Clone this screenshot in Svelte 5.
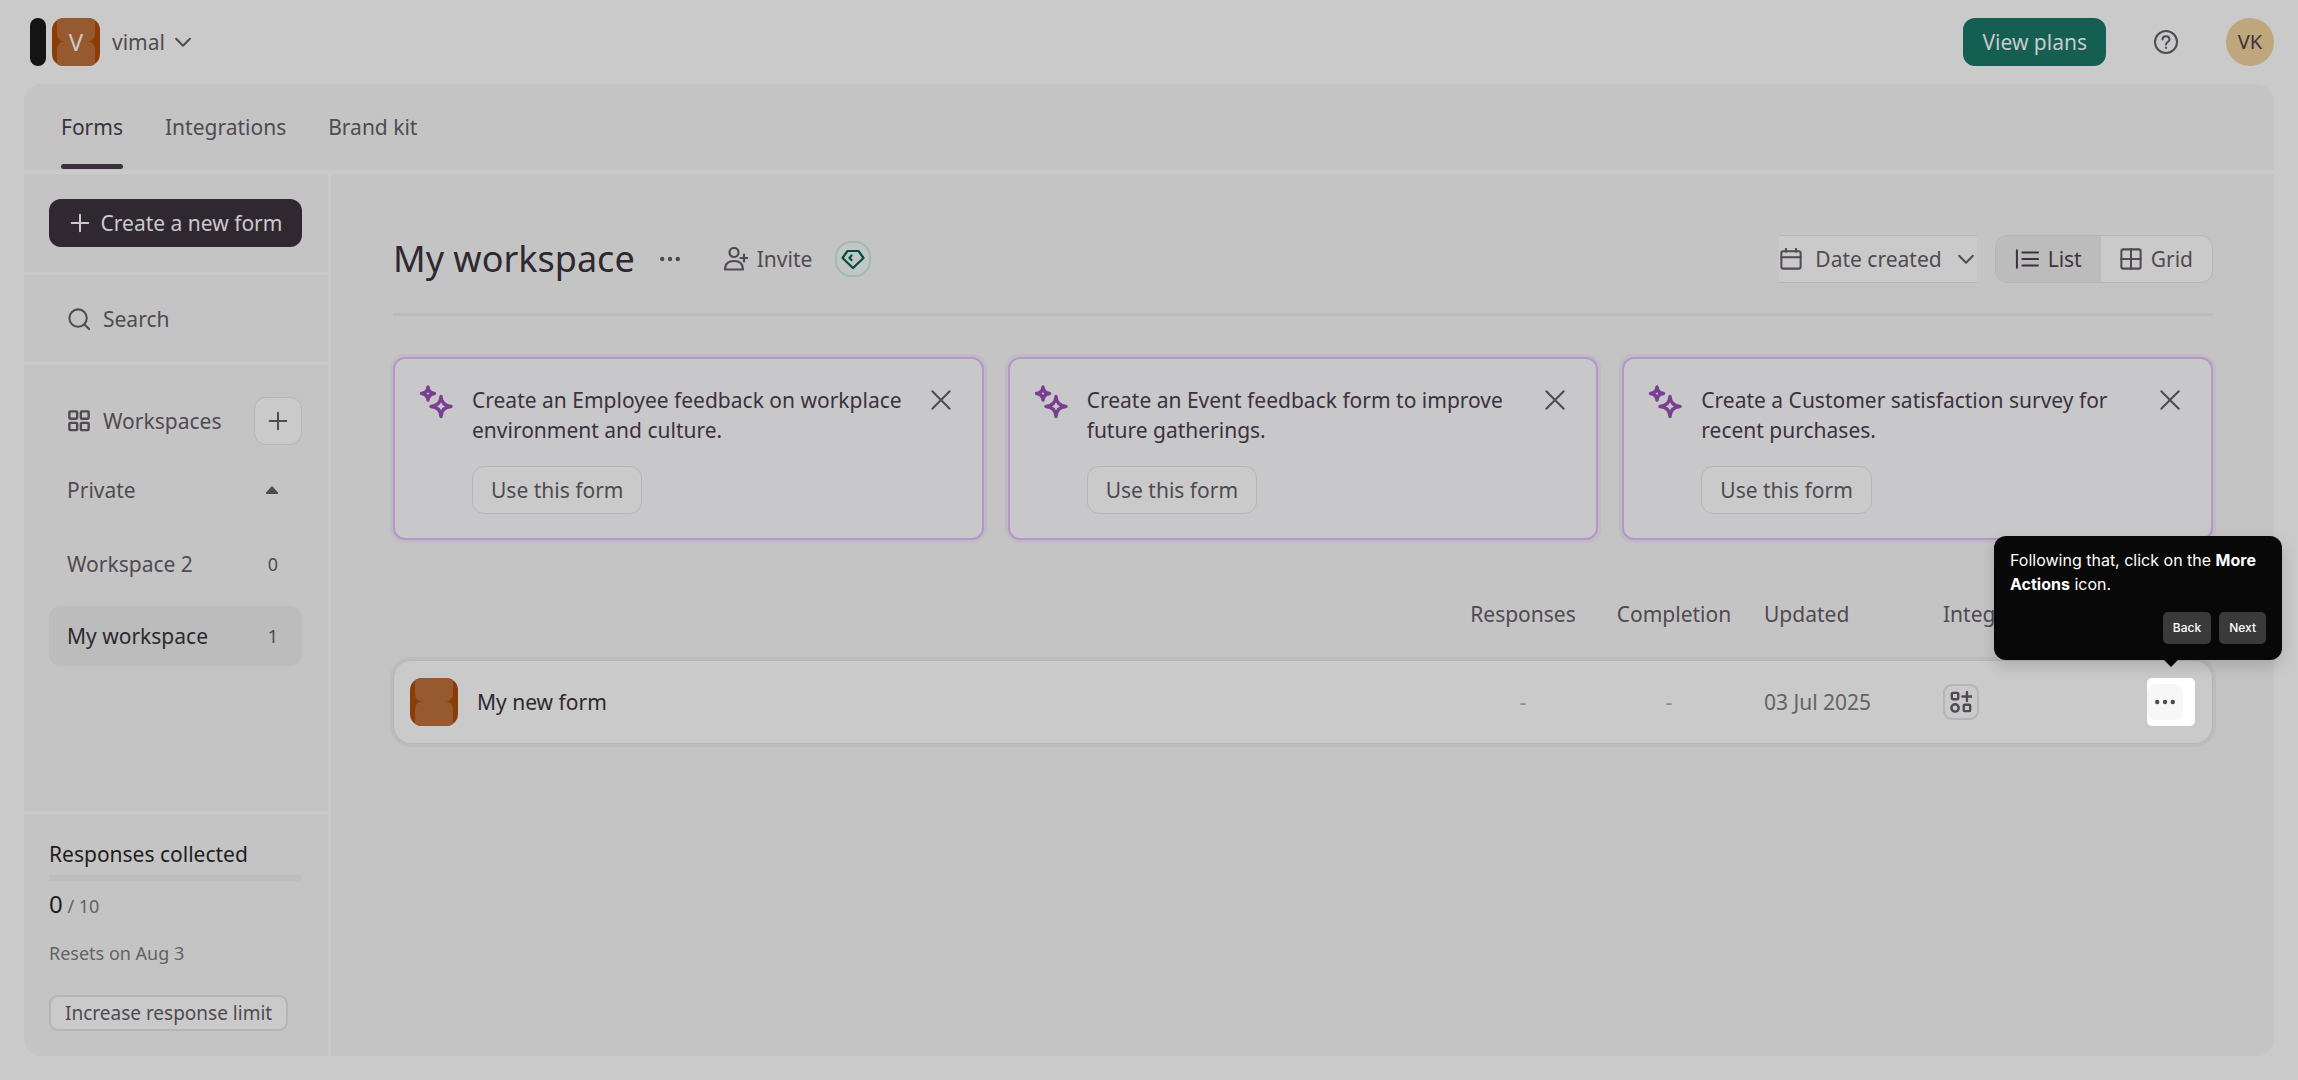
<script>
  let tabs = ["Forms", "Integrations", "Brand kit"];
  let activeTab = "Forms";

  let workspaces = [
    { name: "Workspace 2", forms: 0 },
    { name: "My workspace", forms: 1 },
  ];
  let activeWorkspace = "My workspace";

  let suggestions = [
    "Create an Employee feedback on workplace environment and culture.",
    "Create an Event feedback form to improve future gatherings.",
    "Create a Customer satisfaction survey for recent purchases.",
  ];

  let forms = [{ name: "My new form", updated: "03 Jul 2025" }];

  let view = "list";
  let showTip = true;

  function dismiss(text) {
    suggestions = suggestions.filter((s) => s !== text);
  }
</script>

{#snippet plus()}
  <svg class="icon" viewBox="0 0 24 24"><path d="M12 3v18M3 12h18" /></svg>
{/snippet}

{#snippet dots()}
  <svg class="icon fill" viewBox="0 0 24 24">
    <circle cx="3.500" cy="12" r="2.400" />
    <circle cx="12" cy="12" r="2.400" />
    <circle cx="20.500" cy="12" r="2.400" />
  </svg>
{/snippet}

{#snippet chevron()}
  <svg class="icon" viewBox="0 0 24 24"><path d="M4.500 8.500l7.500 7.500 7.500-7.500" /></svg>
{/snippet}

{#snippet tile()}
  <svg class="tile" viewBox="0 0 48 48">
    <rect width="48" height="48" rx="12" fill="#8a3d06" />
    <path
      d="M5 2Q8 0 12 0h24q4 0 7 2v13q0 8-7 8.500 7 .5 7 8.500v14q-3 2-7 2H12q-4 0-7-2V32q0-8 7-8.500-7-.5-7-8.500z"
      fill="#975a30"
    />
  </svg>
{/snippet}

<div class="page">
  <header>
    <div class="account">
      <span class="mark"></span>
      <span class="avatar">{@render tile()}<span>V</span></span>
      <button class="plain account-name">vimal {@render chevron()}</button>
    </div>
    <div class="header-actions">
      <button class="plans">View plans</button>
      <button class="plain help" aria-label="Help">
        <svg class="icon" viewBox="0 0 24 24">
          <circle cx="12" cy="12" r="11" />
          <path d="M8.500 9.500c0-4.500 7-4.500 7 0 0 2.500-3.500 2.500-3.500 5" />
          <path d="M12 17.500v.5" />
        </svg>
      </button>
      <button class="user" aria-label="Account">VK</button>
    </div>
  </header>

  <div class="panel">
    <nav class="tabs">
      {#each tabs as tab}
        <a href="#{tab}" class:active={tab === activeTab}>{tab}</a>
      {/each}
    </nav>

    <div class="body">
      <aside>
        <div class="create">
          <button>{@render plus()} Create a new form</button>
        </div>
        <div class="search">
          <svg class="icon" viewBox="0 0 24 24">
            <circle cx="11" cy="11" r="9.500" /><path d="M18 18l5 5" />
          </svg>
          <input type="text" placeholder="Search" aria-label="Search" />
        </div>
        <div class="workspaces">
          <div class="heading">
            <svg class="icon bold" viewBox="0 0 24 24">
              <rect x="1.500" y="1.500" width="8.500" height="8" rx="1" />
              <rect x="14" y="1.500" width="8.500" height="8" rx="1" />
              <rect x="1.500" y="14" width="8.500" height="8" rx="1" />
              <rect x="14" y="14" width="8.500" height="8" rx="1" />
            </svg>
            <span>Workspaces</span>
            <button class="outlined add" aria-label="Add workspace">{@render plus()}</button>
          </div>
          <button class="plain item group">
            Private
            <svg viewBox="0 0 12 8"><path d="M6 0l6 6.500q.3 1.500-1 1.500H1Q-.3 8 0 6.500z" /></svg>
          </button>
          <ul>
            {#each workspaces as workspace}
              <li>
                <button
                  class="plain item"
                  class:active={workspace.name === activeWorkspace}
                  on:click={() => (activeWorkspace = workspace.name)}
                >
                  {workspace.name}
                  <small>{workspace.forms}</small>
                </button>
              </li>
            {/each}
          </ul>
        </div>
        <div class="usage">
          <p class="usage-title">Responses collected</p>
          <div class="meter"></div>
          <p class="count"><b>0</b> / 10</p>
          <p class="resets">Resets on Aug 3</p>
          <button class="outlined limit">Increase response limit</button>
        </div>
      </aside>

      <main>
        <div class="toolbar">
          <h1>My workspace</h1>
          <button class="plain more" aria-label="Workspace actions">{@render dots()}</button>
          <button class="plain invite">
            <svg class="icon" viewBox="0 0 24 24">
              <circle cx="10" cy="5.500" r="4.500" />
              <path d="M1 22.500c0-5.500 3.500-8.500 9-8.500s9 3 9 8.500z" />
              <path d="M20 7.500v7M16.500 11h7" />
            </svg>
            Invite
          </button>
          <span class="gem">
            <svg class="icon" viewBox="0 0 24 24">
              <path d="M6.500 4h11l5 7L12 21 1.500 11z" />
              <path d="M10.500 8.500L8.500 11l2 2" />
            </svg>
          </span>
          <button class="sort">
            <svg class="icon" viewBox="0 0 24 24">
              <rect x="1.500" y="3.500" width="21" height="19" rx="2" />
              <path d="M1.500 10h21M6.500 1v3M17.500 1v3" />
            </svg>
            Date created
            {@render chevron()}
          </button>
          <div class="view">
            <button class:active={view === "list"} on:click={() => (view = "list")}>
              <svg class="icon wide" viewBox="0 0 26 24">
                <path d="M2 2.500v19M8 5h17M8 12h17M8 19h17" />
              </svg>
              List
            </button>
            <button class:active={view === "grid"} on:click={() => (view = "grid")}>
              <svg class="icon" viewBox="0 0 24 24">
                <rect x="1.500" y="1.500" width="21" height="21" rx="2" />
                <path d="M12 1.500v21M1.500 12h21" />
              </svg>
              Grid
            </button>
          </div>
        </div>

        <div class="suggestions">
          {#each suggestions as text}
            <section>
              <svg class="sparkles" viewBox="0 0 34 34">
                <path d="M8 2q.5 6 6.500 6.500-6 .5-6.500 6.500-.5-6-6.500-6.500 6-.5 6.500-6.500z" />
                <path d="M21 11.500q.5 9 10 10-9.500.5-10 10-.5-9.500-10-10 9.500-1 10-10z" />
              </svg>
              <div>
                <p>{text}</p>
                <button class="outlined">Use this form</button>
              </div>
              <button class="plain close" aria-label="Dismiss" on:click={() => dismiss(text)}>
                <svg class="icon" viewBox="0 0 24 24"><path d="M2.500 2.500l19 19M21.500 2.500l-19 19" /></svg>
              </button>
            </section>
          {/each}
        </div>

        <table>
          <thead>
            <tr>
              <th></th>
              <th class="center">Responses</th>
              <th class="center completion">Completion</th>
              <th class="updated">Updated</th>
              <th>Integrations</th>
              <th></th>
            </tr>
          </thead>
          <tbody>
            {#each forms as form}
              <tr>
                <td class="name">{@render tile()} {form.name}</td>
                <td class="center">-</td>
                <td class="center">-</td>
                <td class="updated">{form.updated}</td>
                <td>
                  <button class="outlined apps" aria-label="Integrations">
                    <svg class="icon bold" viewBox="0 0 24 24">
                      <rect x="2" y="2" width="7" height="7" rx="1" />
                      <path d="M18.500 1v10M13.500 6h10" />
                      <circle cx="5.500" cy="18.500" r="4" />
                      <rect x="15" y="15" width="7" height="7" rx="1" />
                    </svg>
                  </button>
                </td>
                <td class="actions">
                  <div class="spotlight">
                    <button aria-label="More actions">{@render dots()}</button>
                  </div>
                  {#if showTip}
                    <div class="tip">
                      <p>Following that, click on the <b>More Actions</b> icon.</p>
                      <div>
                        <button>Back</button>
                        <button on:click={() => (showTip = false)}>Next</button>
                      </div>
                    </div>
                  {/if}
                </td>
              </tr>
            {/each}
          </tbody>
        </table>
      </main>
    </div>
  </div>
</div>

<style>
  :global(body) {
    background: #cacaca;
  }
  .page {
    box-sizing: border-box;
    min-height: 100vh;
    padding: 0 24px 24px;
    display: flex;
    flex-direction: column;
    font-family: "Noto Sans", sans-serif;
    font-size: 21px;
    line-height: 30px;
    color: #504a52;
  }
  .page :global(*) {
    box-sizing: border-box;
  }
  p,
  h1,
  ul {
    margin: 0;
    padding: 0;
    list-style: none;
    font-weight: 400;
  }
  b {
    font-weight: 400;
  }
  button,
  input {
    font: inherit;
    color: inherit;
    cursor: pointer;
  }
  .plain {
    border: 0;
    padding: 0;
    background: none;
    display: flex;
    align-items: center;
  }
  .outlined {
    border: 1px solid #b5b5b5;
    border-radius: 12px;
    background: #cacaca;
    display: flex;
    align-items: center;
    justify-content: center;
  }
  .icon {
    width: 22px;
    height: 22px;
    flex: none;
    fill: none;
    stroke: currentColor;
    stroke-width: 2.2;
    stroke-linecap: round;
    stroke-linejoin: round;
  }
  .icon.bold {
    stroke-width: 2.6;
  }
  .icon.fill {
    fill: currentColor;
    stroke: none;
  }
  .icon.wide {
    width: 24px;
  }
  .tile {
    width: 48px;
    height: 48px;
    flex: none;
    display: block;
  }

  header {
    height: 84px;
    padding-left: 6px;
    display: flex;
    align-items: center;
    justify-content: space-between;
  }
  .account,
  .header-actions {
    display: flex;
    align-items: center;
  }
  .mark {
    width: 16px;
    height: 48px;
    border-radius: 8px;
    background: #141414;
    margin-right: 6px;
  }
  .avatar {
    display: grid;
    place-items: center;
    color: #cacaca;
    font-size: 24px;
  }
  .avatar > :global(*) {
    grid-area: 1 / 1;
  }
  .account-name {
    margin-left: 12px;
    gap: 7px;
  }
  .plans {
    height: 48px;
    padding: 0 19px;
    border: 0;
    border-radius: 12px;
    background: #145e52;
    color: #cacaca;
  }
  .help {
    margin: 0 48px;
  }
  .help .icon {
    width: 24px;
    height: 24px;
    stroke-width: 2;
  }
  .user {
    width: 48px;
    height: 48px;
    padding: 0;
    border: 0;
    border-radius: 50%;
    background: #bfa67c;
    color: #3c323e;
    font-size: 20px;
  }

  .panel {
    flex: 1;
    display: flex;
    flex-direction: column;
    border-radius: 18px;
    background: #c4c4c4;
  }
  .tabs {
    height: 90px;
    padding: 0 37px;
    display: flex;
    gap: 42px;
    border-bottom: 4px solid #cacaca;
  }
  .tabs a {
    height: 85px;
    padding-top: 28px;
    color: inherit;
    text-decoration: none;
  }
  .tabs a.active {
    color: #3c323e;
    display: flex;
    flex-direction: column;
    justify-content: space-between;
  }
  .tabs a.active::after {
    content: "";
    height: 5px;
    border-radius: 3px;
    background: #3c323e;
  }
  .body {
    flex: 1;
    display: flex;
  }

  aside {
    width: 307px;
    flex: none;
    display: flex;
    flex-direction: column;
    border-right: 3px solid #cacaca;
  }
  aside > div {
    padding: 25px 26px 25px 25px;
    border-bottom: 3px solid #cacaca;
  }
  .create button {
    width: 100%;
    height: 48px;
    padding: 0;
    display: flex;
    align-items: center;
    justify-content: center;
    gap: 10px;
    border: 0;
    border-radius: 12px;
    background: #2f2830;
    color: #cacaca;
  }
  .search {
    height: 90px;
    display: flex;
    align-items: center;
    gap: 13px;
  }
  aside .search {
    padding-left: 44px;
  }
  .search input {
    width: 100%;
    min-width: 0;
    padding: 0;
    border: 0;
    background: none;
    outline: 0;
  }
  .search input::placeholder {
    color: inherit;
    opacity: 1;
  }
  aside .workspaces {
    flex: 1;
    padding-top: 32px;
  }
  .heading {
    display: flex;
    align-items: center;
    gap: 13px;
    padding-left: 19px;
  }
  .add {
    width: 48px;
    height: 48px;
    margin-left: auto;
    padding: 0;
  }
  .item {
    width: 100%;
    height: 60px;
    padding: 0 24px 0 18px;
    justify-content: space-between;
    border-radius: 12px;
  }
  .group {
    margin: 15px 0 14px;
  }
  .group svg {
    width: 12px;
    height: 8px;
    fill: currentColor;
  }
  ul {
    display: flex;
    flex-direction: column;
    gap: 12px;
  }
  .item small {
    font-size: 18px;
  }
  .item.active {
    background: #bcbcbc;
    color: #2f2830;
  }
  .active small {
    color: #504a52;
  }
  aside .usage {
    border-bottom: 0;
  }
  .usage-title,
  .count b {
    color: #1e1e1e;
  }
  .meter {
    height: 6px;
    margin: 6px 0 8px;
    border-radius: 3px;
    background: #bebebe;
  }
  .count,
  .resets {
    font-size: 18px;
    color: #636363;
  }
  .count b {
    font-size: 24px;
  }
  .resets {
    margin: 17px 0 27px;
  }
  .limit {
    height: 36px;
    padding: 0 14px;
    border-radius: 9px;
    border-width: 2px;
    font-size: 19px;
  }

  main {
    flex: 1;
    min-width: 0;
    padding: 60px 61px 60px 62px;
  }
  .toolbar {
    height: 82px;
    padding-bottom: 30px;
    display: flex;
    align-items: center;
    border-bottom: 3px solid #bcbcbc;
  }
  h1 {
    font-size: 36px;
    line-height: 48px;
    color: #2f2830;
    white-space: nowrap;
  }
  .more {
    margin: 0 43px 0 24px;
  }
  .invite {
    gap: 9px;
  }
  .invite .icon,
  .gem .icon {
    width: 24px;
    height: 24px;
  }
  .gem {
    width: 36px;
    height: 36px;
    margin-left: 23px;
    display: flex;
    align-items: center;
    justify-content: center;
    border: 2px solid #9fbab3;
    border-radius: 16px;
    background: #c2c7c5;
    color: #044b40;
  }
  .sort {
    height: 48px;
    margin: 0 18px 0 auto;
    padding: 0 0 0 1px;
    display: flex;
    align-items: center;
    gap: 13px;
    border: solid #b5b5b5;
    border-width: 1px 0;
    background: #cacaca;
  }
  .view {
    height: 48px;
    display: flex;
    overflow: hidden;
    border: 1px solid #b5b5b5;
    border-radius: 12px;
    background: #cacaca;
  }
  .view button {
    padding: 0 19px;
    display: flex;
    align-items: center;
    gap: 9px;
    border: 0;
    background: none;
  }
  .view button.active {
    background: #bcbcbc;
    color: #3c323e;
  }

  .suggestions {
    margin-top: 41px;
    display: grid;
    grid-template-columns: repeat(3, 1fr);
    gap: 24px;
  }
  section {
    padding: 26px 30px 24px 25px;
    display: flex;
    align-items: flex-start;
    border: 2px solid #b497c4;
    border-radius: 12px;
    background: #c8c8ca;
    box-shadow: 0 0 0 3px #c1b9c5;
    color: #3c323e;
  }
  .sparkles {
    width: 34px;
    height: 34px;
    margin-right: 18px;
    flex: none;
    fill: none;
    stroke: #7b3f91;
    stroke-width: 3.4;
    stroke-linejoin: round;
  }
  section > div {
    flex: 1;
  }
  section .outlined {
    height: 48px;
    margin-top: 21px;
    padding: 0 18px;
    color: #504a52;
  }
  .close {
    margin: 4px 0 0 20px;
    color: #504a52;
  }

  table {
    width: 100%;
    margin-top: 56px;
    display: block;
  }
  thead,
  tbody {
    display: block;
  }
  tr {
    display: grid;
    grid-template-columns: 1fr 142px 150px 199px 204px 66px;
    align-items: center;
  }
  th,
  td {
    padding: 0;
    text-align: left;
    font-weight: 400;
  }
  thead tr {
    height: 36px;
    margin-bottom: 28px;
  }
  tbody tr {
    height: 84px;
    border-radius: 18px;
    background: #cacaca;
    box-shadow: inset 0 0 0 1px #b5b5b5, 0 0 0 3px #bcbcbc;
  }
  td {
    color: #636363;
  }
  .center {
    text-align: center;
  }
  td.center {
    color: #8c8c8c;
  }
  .completion {
    padding-left: 10px;
  }
  .updated {
    padding-left: 20px;
  }
  .name {
    padding-left: 17px;
    display: flex;
    align-items: center;
    gap: 19px;
    color: #2f2830;
  }
  .apps {
    width: 36px;
    height: 36px;
    padding: 0;
    border-radius: 9px;
    border-width: 2px;
    color: #504a52;
  }
  .actions {
    position: relative;
  }
  .spotlight {
    width: 48px;
    height: 48px;
    display: flex;
    align-items: center;
    border-radius: 5px;
    background: #fff;
  }
  .spotlight button {
    width: 36px;
    height: 36px;
    padding: 0;
    display: flex;
    align-items: center;
    justify-content: center;
    border: 0;
    border-radius: 9px;
    background: #f7f7f7;
    color: #504a52;
  }
  .tip {
    position: absolute;
    right: -69px;
    bottom: 66px;
    width: 288px;
    padding: 12px 16px 16px;
    border-radius: 12px;
    background: #080808;
    box-shadow: 0 6px 16px rgba(0, 0, 0, 0.15);
    color: #fff;
    font-family: Inter, sans-serif;
    font-size: 16px;
    line-height: 24px;
  }
  .tip::after {
    content: "";
    position: absolute;
    top: 100%;
    left: 170px;
    border: solid transparent;
    border-width: 7px 7px 0;
    border-top-color: #080808;
  }
  .tip b {
    font-weight: 700;
  }
  .tip div {
    margin-top: 16px;
    display: flex;
    justify-content: flex-end;
    gap: 8px;
  }
  .tip button {
    height: 32px;
    padding: 0 10px;
    border: 0;
    border-radius: 5px;
    background: #3a3a3a;
    font-size: 12px;
    font-weight: 500;
  }
</style>
